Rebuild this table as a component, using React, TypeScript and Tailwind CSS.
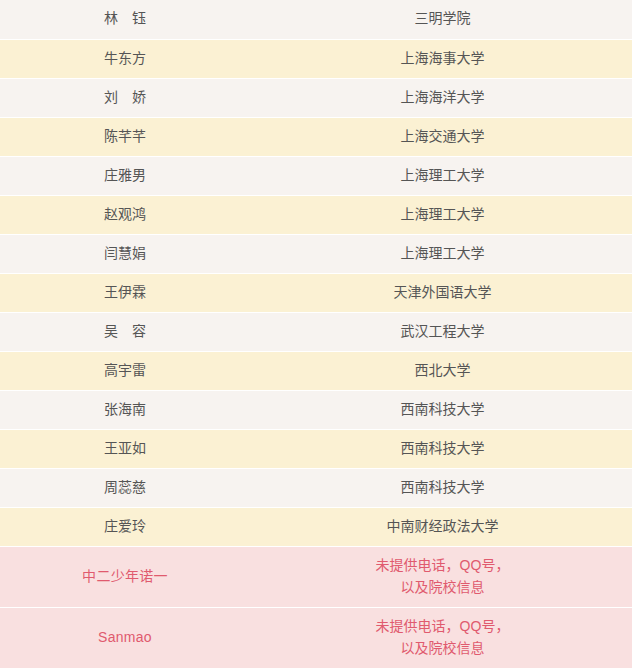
const rows: { name: string; school: string; bg: string }[] = [
  { name: '林　钰', school: '三明学院', bg: 'bg-[#f7f3f0]' },
  { name: '牛东方', school: '上海海事大学', bg: 'bg-[#fbf1d3]' },
  { name: '刘　娇', school: '上海海洋大学', bg: 'bg-[#f7f3f0]' },
  { name: '陈芊芊', school: '上海交通大学', bg: 'bg-[#fbf1d3]' },
  { name: '庄雅男', school: '上海理工大学', bg: 'bg-[#f7f3f0]' },
  { name: '赵观鸿', school: '上海理工大学', bg: 'bg-[#fbf1d3]' },
  { name: '闫慧娟', school: '上海理工大学', bg: 'bg-[#f7f3f0]' },
  { name: '王伊霖', school: '天津外国语大学', bg: 'bg-[#fbf1d3]' },
  { name: '吴　容', school: '武汉工程大学', bg: 'bg-[#f7f3f0]' },
  { name: '高宇雷', school: '西北大学', bg: 'bg-[#fbf1d3]' },
  { name: '张海南', school: '西南科技大学', bg: 'bg-[#f7f3f0]' },
  { name: '王亚如', school: '西南科技大学', bg: 'bg-[#fbf1d3]' },
  { name: '周蕊慈', school: '西南科技大学', bg: 'bg-[#f7f3f0]' },
  { name: '庄爱玲', school: '中南财经政法大学', bg: 'bg-[#fbf1d3]' },
]

const missing = ['中二少年诺一', 'Sanmao']

export default function App() {
  return (
    <div className="bg-white w-[635px] h-[669px] overflow-hidden font-['Liberation_Sans','Noto_Sans_CJK_SC',sans-serif] text-[14px] leading-[22px]">
      <table className="w-[632px] border-collapse table-fixed">
        <colgroup>
          <col className="w-[252px]" />
          <col />
        </colgroup>
        <tbody>
          {rows.map((r, i) => (
            <tr key={i} className={`${r.bg} text-[#555555]`}>
              <td className="h-[39px] border-b border-white text-center p-0 pr-[2px] pb-[2px]">{r.name}</td>
              <td className="h-[39px] border-b border-white text-center p-0 pl-[1px] pb-[2px]">{r.school}</td>
            </tr>
          ))}
          {missing.map((n) => (
            <tr key={n} className="bg-[#f9e0e0] text-[#e05a6e]">
              <td className="h-[61px] border-t border-b border-white text-center p-0 pr-[2px] pb-[2px] tracking-[0.3px]">{n}</td>
              <td className="h-[61px] border-t border-b border-white text-center p-0 pl-[1px] pb-[2px]">
                未提供电话，QQ号，
                <br />
                以及院校信息
              </td>
            </tr>
          ))}
        </tbody>
      </table>
    </div>
  )
}
